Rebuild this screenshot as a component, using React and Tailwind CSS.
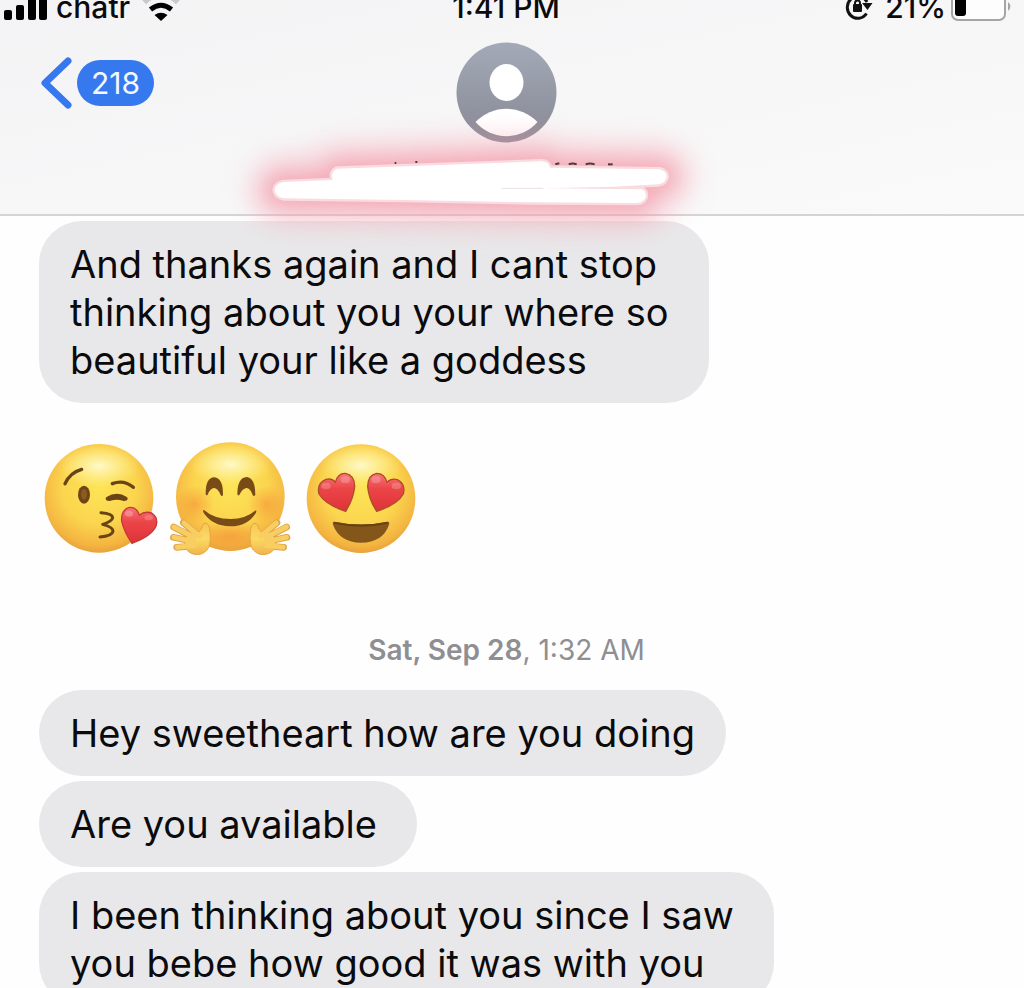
import React from 'react';

const messages = [
  { text: 'Hey sweetheart how are you doing', snug: true },
  { text: 'Are you available' },
  { text: 'I been thinking about you since I saw\nyou bebe how good it was with you' },
];

function Bubble({ snug, children }) {
  return (
    <p className={`w-fit max-w-full whitespace-pre-line rounded-[43px] bg-[#e8e8ea] py-[19px] pl-[31px] text-[38px] leading-[48px] text-[#0b0b0d] ${snug ? 'pr-[31px]' : 'pr-10'}`}>
      {children}
    </p>
  );
}

function Signal() {
  return (
    <svg className="h-[21px] w-[44px] shrink-0 overflow-visible" viewBox="0 0 44 21" aria-label="Signal">
      <rect x="0" y="10" width="8" height="10" rx="2" />
      <rect x="12" y="5" width="8" height="15" rx="2" />
      <rect x="24" y="-4" width="8" height="24" rx="2" />
      <rect x="35" y="-9" width="8" height="29" rx="2" />
    </svg>
  );
}

function Wifi() {
  return (
    <svg className="h-[21px] w-[38px] shrink-0 overflow-visible" viewBox="0 0 38 21" fill="none" aria-label="Wi-Fi">
      <path d="M2 2Q19 -14 36 2" stroke="#c9c9cb" strokeWidth="6" />
      <path d="M8.500 9.500Q19 1 29.500 9.500" stroke="#000" strokeWidth="5" />
      <path d="M19 21L12.500 15Q19 10.500 25.500 15Z" fill="#000" />
    </svg>
  );
}

function RotationLock() {
  return (
    <svg className="h-[21px] w-[28px] shrink-0 overflow-visible" viewBox="0 0 28 21" fill="none" aria-label="Rotation lock">
      <path d="M21.500 13.500A10.500 11 0 1 1 22 2" stroke="#111" strokeWidth="3" />
      <path d="M17 3H27.500L22.500 10Z" fill="#111" />
      <rect x="8" y="4" width="9" height="8" rx="1" fill="#111" />
      <path d="M10 5V3A2.500 2.500 0 0 1 15 3V5" stroke="#111" strokeWidth="2" />
    </svg>
  );
}

function Battery() {
  return (
    <svg className="h-[21px] w-[62px] shrink-0 overflow-visible" viewBox="0 0 62 21" fill="none" aria-label="Battery">
      <rect x="2" y="-8" width="53" height="28" rx="6" fill="#fdfdfd" stroke="#a5a5a7" strokeWidth="2" />
      <rect x="5" y="-5" width="11" height="21" rx="3" fill="#000" />
      <path d="M58 2Q63 6 58 11Z" fill="#a5a5a7" />
    </svg>
  );
}

function Avatar() {
  return (
    <svg className="size-[101px]" viewBox="0 0 101 101">
      <defs>
        <linearGradient id="avatar" x1="0" y1="0" x2="0" y2="1">
          <stop offset="0" stopColor="#a3aab7" />
          <stop offset="1" stopColor="#878894" />
        </linearGradient>
      </defs>
      <circle cx="50.500" cy="50.500" r="50" fill="url(#avatar)" />
      <ellipse cx="50.500" cy="40.500" rx="17" ry="18.500" fill="#fff" />
      <path d="M19.500 80A43 43 0 0 1 81.500 80A41 41 0 0 1 19.500 80Z" fill="#fff" />
    </svg>
  );
}

// Marker strokes hiding the contact name, with their pink glow
function Scribble() {
  const shape =
    'M320 146L935 124Q955 124 960 143L1290 148Q1312 154 1310 172Q1306 191 1285 193L1150 200L940 205L1235 208Q1250 212 1247 232Q1242 248 1220 249L900 247L520 240L160 235Q136 230 134 210Q136 190 160 186L308 180Q300 156 320 146Z';
  return (
    <svg className="pointer-events-none h-[71px] w-[480px] max-w-full overflow-visible" viewBox="266 143 480 71" aria-hidden="true">
      <defs>
        <filter id="glow" filterUnits="userSpaceOnUse" x="-200" y="-200" width="1900" height="800">
          <feGaussianBlur stdDeviation="26" />
        </filter>
        <filter id="haze" filterUnits="userSpaceOnUse" x="-200" y="-200" width="1900" height="800">
          <feGaussianBlur stdDeviation="40" />
        </filter>
      </defs>
      <g transform="translate(230 120) scale(0.33333)">
        <path d={shape} fill="#f6a3b1" stroke="#f6a3b1" strokeWidth="150" strokeLinejoin="round" opacity="0.5" filter="url(#haze)" />
        <path d={shape} fill="#f18698" stroke="#f18698" strokeWidth="48" strokeLinejoin="round" opacity="0.45" filter="url(#glow)" />
        <g fill="none" stroke="#4b3a40" strokeWidth="6">
          <path d="M976 133L988 130" />
          <path d="M1016 133Q1028 128 1040 133" />
          <path d="M1067 133Q1080 128 1094 133" />
          <path d="M1134 133H1148" />
          <path d="M494 129H499M556 126H562" />
        </g>
        <path d={shape} fill="#fff" stroke="#fadbe0" strokeWidth="14" strokeLinejoin="round" />
        <path d={shape} fill="#fff" />
        <path d="M815 205L940 205" stroke="#eadfe1" strokeWidth="3" />
      </g>
    </svg>
  );
}

function EmojiDefs() {
  return (
    <svg className="absolute size-0" aria-hidden="true">
      <defs>
        <radialGradient id="face" cx="0.5" cy="0.4" r="0.62">
          <stop offset="0" stopColor="#fde457" />
          <stop offset="0.55" stopColor="#fbd54e" />
          <stop offset="0.86" stopColor="#f4b541" />
          <stop offset="1" stopColor="#e59d38" />
        </radialGradient>
        <radialGradient id="shine">
          <stop offset="0" stopColor="#fffcd8" stopOpacity="0.9" />
          <stop offset="0.5" stopColor="#fff9b8" stopOpacity="0.5" />
          <stop offset="1" stopColor="#fff59b" stopOpacity="0" />
        </radialGradient>
        <radialGradient id="blush">
          <stop offset="0" stopColor="#f58432" stopOpacity="0.5" />
          <stop offset="1" stopColor="#f58432" stopOpacity="0" />
        </radialGradient>
        <linearGradient id="heart" x1="0" y1="0" x2="0" y2="1">
          <stop offset="0" stopColor="#f7767c" />
          <stop offset="0.4" stopColor="#ec4548" />
          <stop offset="1" stopColor="#dc3337" />
        </linearGradient>
        <linearGradient id="hand" x1="0" y1="0" x2="0" y2="1">
          <stop offset="0" stopColor="#f8c659" />
          <stop offset="0.5" stopColor="#fbd963" />
          <stop offset="1" stopColor="#f0b44c" />
        </linearGradient>
      </defs>
    </svg>
  );
}

function KissEmoji() {
  return (
    <svg className="h-[124px] w-[120px]" viewBox="27 18 360 372" role="img" aria-label="Face blowing a kiss">
      <circle cx="207" cy="205" r="163" fill="url(#face)" />
      <ellipse cx="207" cy="108" rx="125" ry="64" fill="url(#shine)" />
      <g fill="none" stroke="#6b4416" strokeLinecap="round" strokeLinejoin="round">
        <path d="M105 161Q121 127 155 118" strokeWidth="10" />
        <path d="M247 161Q282 148 310 172" strokeWidth="10" />
        <path d="M233 206Q261 188 287 206" strokeWidth="12" />
        <path d="M239 206Q261 198 281 206" strokeWidth="14" />
        <path d="M213 248Q247 250 248 263Q246 274 218 283Q250 291 249 304Q246 318 210 321" strokeWidth="9" />
      </g>
      <ellipse cx="162" cy="194" rx="18" ry="27" fill="#6f4517" />
      <ellipse cx="162" cy="193" rx="9" ry="16" fill="#8d5b1d" />
      <path d="M306 340Q283 307 275 274Q272 240 298 232Q321 231 328 256Q344 242 365 249Q386 263 378 289Q363 320 306 340Z" fill="url(#heart)" stroke="#c43a36" strokeWidth="4" />
      <ellipse cx="297" cy="251" rx="12" ry="9" fill="#fff" opacity="0.25" />
      <ellipse cx="356" cy="263" rx="13" ry="8" fill="#fff" opacity="0.18" />
    </svg>
  );
}

function Hand() {
  return (
    <g strokeLinecap="round" strokeLinejoin="round">
      <path d="M43 291L98 320M42 322L98 334M52 352L98 348M72 278L116 316" stroke="#dfa246" strokeWidth="20" />
      <path d="M138 280Q151 279 152 307Q156 346 143 360Q125 380 98 371Q76 362 76 338Q80 314 101 306L118 307Q127 300 130 286Q133 280 138 280Z" fill="url(#hand)" stroke="#e3a647" strokeWidth="3" />
      <path d="M44 291L104 322M44 322L106 335M54 352L106 346M74 279L120 318" stroke="#f8cd61" strokeWidth="15" />
    </g>
  );
}

function HugEmoji() {
  return (
    <svg className="h-[124px] w-[130px]" viewBox="17 18 390 372" role="img" aria-label="Hugging face">
      <circle cx="213" cy="200" r="163" fill="url(#face)" />
      <ellipse cx="213" cy="103" rx="125" ry="64" fill="url(#shine)" />
      <circle cx="107" cy="222" r="56" fill="url(#blush)" />
      <circle cx="320" cy="222" r="55" fill="url(#blush)" />
      <ellipse cx="213" cy="318" rx="100" ry="44" fill="url(#blush)" />
      <g fill="#794b17">
        <path d="M139 193Q138 143 165 142Q192 145 191 196Q187 200 184 195Q175 174 164 174Q153 174 145 194Q141 198 139 193Z" />
        <path d="M234 193Q234 143 262 141Q288 145 288 194Q284 201 280 195Q272 173 261 174Q249 176 240 195Q236 198 234 193Z" />
        <path d="M134 240Q164 267 214 267Q260 266 287 242Q293 239 290 248Q265 289 213 289Q157 288 132 247Q130 239 134 240Z" />
      </g>
      <Hand />
      <g transform="translate(425 0) scale(-1 1)">
        <Hand />
      </g>
    </svg>
  );
}

function HeartEyesEmoji() {
  return (
    <svg className="h-[124px] w-[120px]" viewBox="18 18 360 372" role="img" aria-label="Smiling face with heart eyes">
      <circle cx="198" cy="206" r="163" fill="url(#face)" />
      <ellipse cx="198" cy="106" rx="125" ry="64" fill="url(#shine)" />
      <g fill="url(#heart)" stroke="#ae4d27" strokeWidth="4" strokeLinejoin="round">
        <path d="M152 244Q91 224 72 192Q64 160 93 148Q112 144 121 157Q128 129 151 130Q179 135 179 169Q176 205 152 244Z" />
        <path d="M245 244Q221 207 218 169Q219 134 245 130Q269 130 276 157Q289 144 307 149Q333 162 325 192Q307 224 245 244Z" />
      </g>
      <g fill="#fff" opacity="0.2">
        <ellipse cx="93" cy="168" rx="14" ry="10" />
        <ellipse cx="151" cy="149" rx="14" ry="10" />
        <ellipse cx="243" cy="149" rx="14" ry="10" />
        <ellipse cx="304" cy="168" rx="14" ry="10" />
      </g>
      <path d="M117 275Q198 292 278 275Q285 275 282 284Q264 337 198 338Q134 337 114 284Q112 275 117 275Z" fill="#85561a" />
      <path d="M117 275Q198 292 278 275L278 281Q198 299 117 281Z" fill="#69420f" />
    </svg>
  );
}

export default function App() {
  return (
    <div className="h-screen overflow-hidden bg-[#fefefe] font-['Inter','Liberation_Sans',sans-serif]">
      <EmojiDefs />

      <header className="relative border-b-2 border-[#d4d4d7] bg-linear-to-br from-[#f3f3f5] to-[#fafafa]">
        {/* Status bar, partly scrolled off the top edge */}
        <div className="-mt-2 grid h-[29px] grid-cols-[1fr_auto_1fr] items-end pr-3 text-[30px] leading-[28px] font-medium text-[#0b0b0d]">
          <div className="flex items-end pl-1">
            <Signal />
            <span className="mr-3 ml-2">chatr</span>
            <Wifi />
          </div>
          <time>1:41 PM</time>
          <div className="flex items-end justify-end">
            <RotationLock />
            <span className="mr-1 ml-3">21%</span>
            <Battery />
          </div>
        </div>

        <nav className="grid grid-cols-[1fr_auto_1fr] items-start pt-[21px] pr-[11px]">
          <button className="mt-[14px] ml-10 flex w-fit items-center gap-1" aria-label="Back, 218 unread">
            <svg className="h-[54px] w-[33px]" viewBox="0 0 33 54" fill="none" stroke="#3679ef" strokeWidth="7" strokeLinecap="round" strokeLinejoin="round">
              <path d="M28 5L5 27L28 49" />
            </svg>
            <span className="rounded-full bg-[#3679ef] px-[14px] py-[7px] text-[30px] leading-[32px] text-[#f4f8ff]">218</span>
          </button>
          <button aria-label="Contact details">
            <Avatar />
          </button>
        </nav>

        <div className="flex justify-center pr-3">
          <Scribble />
        </div>
      </header>

      <main className="pt-[5px] pr-[50px] pl-[39px]">
        <Bubble>{'And thanks again and I cant stop\nthinking about you your where so\nbeautiful your like a goddess'}</Bubble>

        <div className="mt-[33px] flex gap-[6px]">
          <KissEmoji />
          <HugEmoji />
          <HeartEyesEmoji />
        </div>

        <p className="mt-[72px] text-center text-[28px] leading-[36px] text-[#8e8e93]">
          <span className="font-semibold">Sat, Sep 28</span>, 1:32 AM
        </p>

        <div className="mt-[22px] flex flex-col gap-[5px]">
          {messages.map(({ text, snug }) => (
            <Bubble key={text} snug={snug}>{text}</Bubble>
          ))}
        </div>
      </main>
    </div>
  );
}
